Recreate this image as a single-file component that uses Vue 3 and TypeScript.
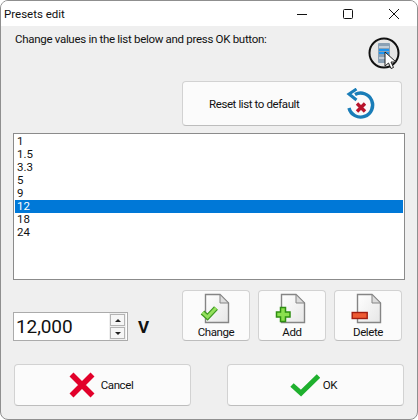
<script setup lang="ts">
import { ref } from 'vue'

const presets = ref<string[]>(['1', '1.5', '3.3', '5', '9', '12', '18', '24'])
const selected = ref(5)
</script>

<template>
  <div class="window">
    <div class="titlebar">
      <span class="title">Presets edit</span>
      <div class="controls">
        <svg width="12" height="12" viewBox="0 0 12 12"><path d="M1 6.5H11" stroke="#111" fill="none" /></svg>
        <svg width="12" height="12" viewBox="0 0 12 12"><rect x="1.5" y="1.5" width="9" height="9" rx="1" stroke="#111" fill="none" /></svg>
        <svg width="12" height="12" viewBox="0 0 12 12"><path d="M1 1L11 11M11 1L1 11" stroke="#111" fill="none" /></svg>
      </div>
    </div>

    <div class="content">
      <div class="prompt-row">
        <span class="prompt">Change values in the list below and press OK button:</span>
        <svg class="hint" width="34" height="34" viewBox="0 0 34 34">
          <circle cx="16" cy="16" r="14.5" fill="#e6e6e6" stroke="#111" stroke-width="2" />
          <rect x="10" y="6" width="12" height="20" rx="1" fill="#8aa0b4" />
          <path d="M11 10H21M11 21H21" stroke="#d4dce4" stroke-width="1.5" />
          <path d="M11 13H21M11 16H21" stroke="#1e95f0" stroke-width="2" />
          <path d="M17 15V29L20.5 26L23 31.5L25.5 30.5L23 25H28Z" fill="#fff" stroke="#222" stroke-width="1" stroke-linejoin="round" />
        </svg>
      </div>

      <div class="reset-row">
        <button class="btn reset">
          <span class="reset-label">Reset list to default</span>
          <svg width="30" height="32" viewBox="0 0 30 32">
            <path d="M9 6.5A12 12 0 1 1 3 20" fill="none" stroke="#1a7db8" stroke-width="3.4" />
            <path d="M10.5 1L3 6L10.5 12" fill="none" stroke="#1a7db8" stroke-width="3" />
            <path d="M11 15.5L19 23.5M19 15.5L11 23.5" stroke="#b8142c" stroke-width="3.4" />
          </svg>
        </button>
      </div>

      <ul class="list">
        <li v-for="(p, i) in presets" :key="p" :class="{ active: i === selected }" @click="selected = i">{{ p }}</li>
      </ul>

      <div class="edit-row">
        <div class="value-group">
          <div class="spin">
            <span class="spin-value">12,000</span>
            <div class="spin-arrows">
              <span class="arrow"><i class="up"></i></span>
              <span class="arrow"><i class="down"></i></span>
            </div>
          </div>
          <span class="unit">V</span>
        </div>
        <div class="edit-buttons">
          <button class="btn doc-btn">
            <svg width="34" height="32" viewBox="0 0 34 32">
              <defs>
                <linearGradient id="page" x1="0" y1="0" x2="1" y2="1">
                  <stop offset="0" stop-color="#ffffff" />
                  <stop offset="1" stop-color="#e6e6e6" />
                </linearGradient>
              </defs>
              <path d="M6.5 2.5H21L29.5 11V30.5H6.5Z" fill="url(#page)" stroke="#858585" stroke-width="1.4" />
              <path d="M21 2.5V11H29.5Z" fill="#dcdcdc" stroke="#858585" />
              <path d="M3.5 20.5L8.5 25L17 16" fill="none" stroke="#3f9a22" stroke-width="5.4" />
              <path d="M3.5 20.5L8.5 25L17 16" fill="none" stroke="#93e05c" stroke-width="3" />
            </svg>
            <span>Change</span>
          </button>
          <button class="btn doc-btn">
            <svg width="34" height="32" viewBox="0 0 34 32">
              <path d="M6.5 2.5H21L29.5 11V30.5H6.5Z" fill="url(#page)" stroke="#858585" stroke-width="1.4" />
              <path d="M21 2.5V11H29.5Z" fill="#dcdcdc" stroke="#858585" />
              <path d="M5.5 15.5H10.5V20H15V25H10.5V29.5H5.5V25H1.5V20H5.5Z" fill="#8be04e" stroke="#2f8f12" stroke-width="1.5" />
            </svg>
            <span>Add</span>
          </button>
          <button class="btn doc-btn">
            <svg width="34" height="32" viewBox="0 0 34 32">
              <path d="M6.5 2.5H21L29.5 11V30.5H6.5Z" fill="url(#page)" stroke="#858585" stroke-width="1.4" />
              <path d="M21 2.5V11H29.5Z" fill="#dcdcdc" stroke="#858585" />
              <rect x="1.2" y="20.5" width="15" height="6" fill="#ee5a32" stroke="#a01c10" stroke-width="1.4" />
            </svg>
            <span>Delete</span>
          </button>
        </div>
      </div>

      <div class="action-row">
        <button class="btn action">
          <svg width="26" height="26" viewBox="0 0 26 26">
            <path d="M2.5 2.5L23.5 23.5M23.5 2.5L2.5 23.5" stroke="#e2002a" stroke-width="5.6" fill="none" />
          </svg>
          <span>Cancel</span>
        </button>
        <button class="btn action ok">
          <svg width="30" height="24" viewBox="0 0 30 24">
            <path d="M2 12L11 20L28.5 3" stroke="#1fb02e" stroke-width="5" fill="none" />
          </svg>
          <span>OK</span>
        </button>
      </div>
    </div>
  </div>
</template>

<style>
html,
body {
  background: #fff;
}
</style>

<style scoped>
.window {
  width: 418px;
  height: 420px;
  box-sizing: border-box;
  display: flex;
  flex-direction: column;
  background: #efefef;
  border: 1px solid #8f8f8f;
  border-radius: 8px;
  overflow: hidden;
  font-family: Roboto, "Open Sans", sans-serif;
  font-size: 11.5px;
  color: #111;
}
.titlebar {
  height: 25px;
  flex: none;
  display: flex;
  align-items: center;
  justify-content: space-between;
  background: #fff;
  padding-left: 3px;
}
.controls {
  display: flex;
  gap: 34px;
  padding-right: 17px;
}
.content {
  flex: 1;
  display: flex;
  flex-direction: column;
  padding: 0 12px 0 12px;
}
.prompt-row {
  height: 55px;
  display: flex;
  justify-content: space-between;
  margin-right: 3px;
}
.prompt {
  margin: 5px 0 0 2px;
  line-height: 16px;
  letter-spacing: -0.3px;
}
.hint {
  margin-top: 11px;
}
.reset-row {
  display: flex;
  justify-content: flex-end;
  padding-right: 3px;
}
.btn {
  box-sizing: border-box;
  font: inherit;
  color: inherit;
  letter-spacing: -0.4px;
  background: #fbfbfb;
  border: 1px solid #d2d2d2;
  border-bottom-color: #bdbdbd;
  border-radius: 4px;
  padding: 0;
}
.reset {
  width: 220px;
  height: 45px;
  display: flex;
  align-items: center;
  padding-left: 26px;
}
.reset-label {
  width: 137px;
  text-align: left;
}
.list {
  height: 147px;
  box-sizing: border-box;
  margin: 7px 0 0;
  padding: 1px 1px 0;
  list-style: none;
  background: #fff;
  border: 1px solid #8b8b8b;
  width: 392px;
}
.list li {
  height: 13px;
  line-height: 13px;
  padding-left: 2px;
}
.list li.active {
  background: #0078d7;
  color: #fff;
}
.edit-row {
  display: flex;
  justify-content: space-between;
  margin-top: 10px;
  padding-right: 3px;
}
.value-group {
  display: flex;
  align-items: center;
  align-self: flex-end;
  gap: 10px;
}
.spin {
  width: 115px;
  height: 29px;
  box-sizing: border-box;
  display: flex;
  align-items: center;
  justify-content: space-between;
  background: #fff;
  border: 1px solid #ababab;
  padding: 1px 1px 1px 2px;
}
.spin-value {
  font-size: 19px;
  letter-spacing: -0.1px;
}
.spin-arrows {
  display: flex;
  flex-direction: column;
  gap: 1px;
  height: 100%;
  background: #efefef;
  padding: 1px;
}
.arrow {
  flex: 1;
  width: 13px;
  display: flex;
  align-items: center;
  justify-content: center;
  background: #f6f6f6;
  border: 1px solid #b4b4b4;
}
.arrow i {
  border-left: 3px solid transparent;
  border-right: 3px solid transparent;
}
.arrow .up {
  border-bottom: 3px solid #222;
}
.arrow .down {
  border-top: 3px solid #222;
}
.unit {
  font-size: 17px;
  font-weight: 700;
  color: #111;
}
.edit-buttons {
  display: flex;
  gap: 8px;
}
.doc-btn {
  width: 68px;
  height: 51px;
  display: flex;
  flex-direction: column;
  align-items: center;
  padding-top: 1px;
  line-height: 16px;
}
.action-row {
  display: flex;
  justify-content: space-between;
  margin-top: 23px;
  padding: 0 1px 0 1px;
}
.action {
  width: 177px;
  height: 42px;
  display: flex;
  align-items: center;
  justify-content: center;
  gap: 6px;
  padding-right: 3px;
}
.ok {
  gap: 3px;
  padding-right: 4px;
}
</style>
